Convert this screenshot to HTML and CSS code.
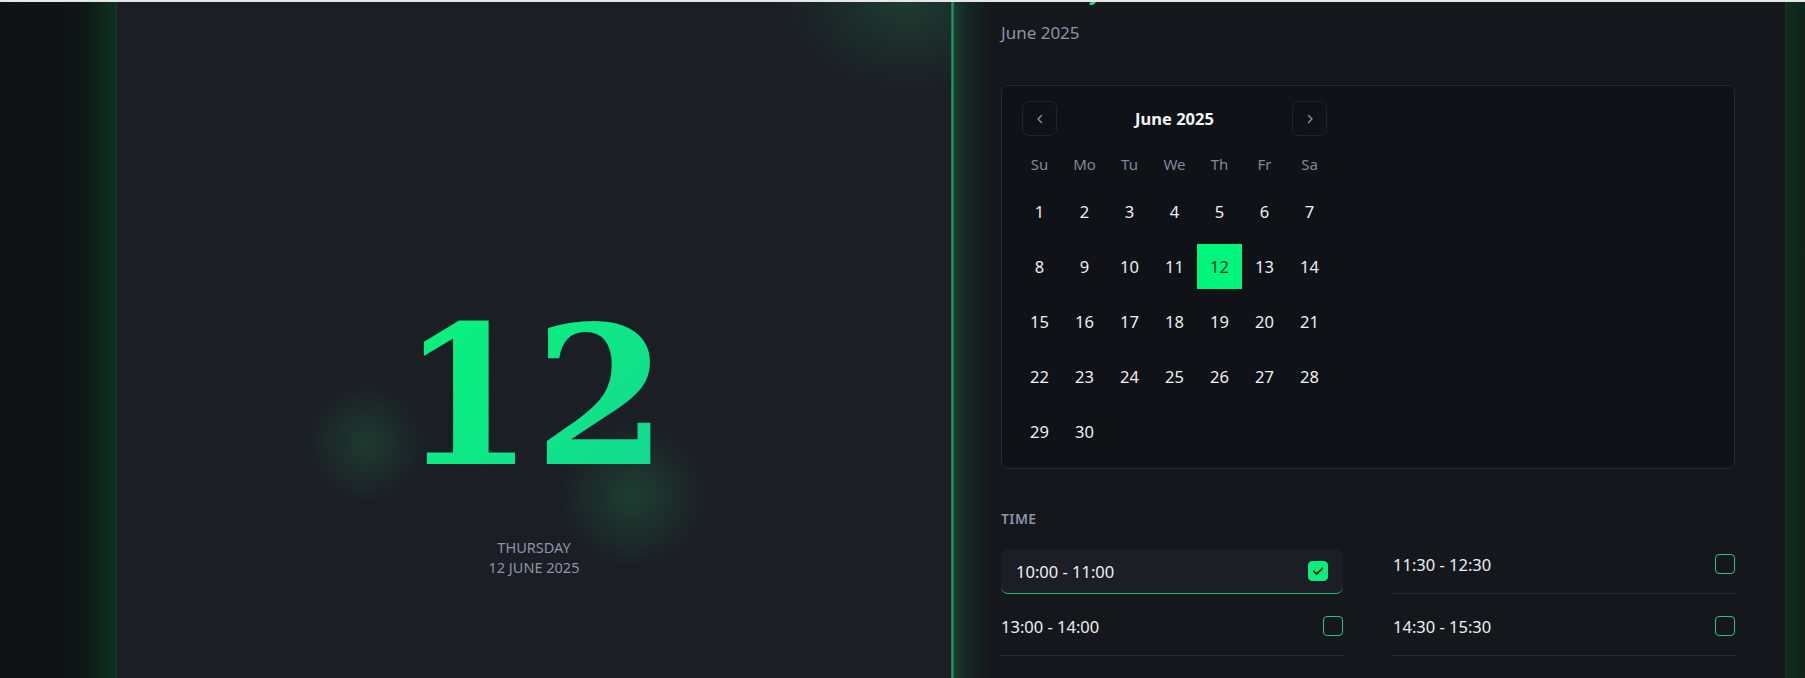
FILE: index.html
```html
<!DOCTYPE html>
<html lang="en">
<head>
<meta charset="utf-8">
<title>Booking</title>
<link rel="stylesheet" href="styles.css">
</head>
<body>
<div class="topbar"></div>
<div class="page">
  <div class="gutter gutter-left"></div>
  <main class="card">
    <section class="hero">
      <div class="day-number">12</div>
      <div class="day-meta">
        <span>Thursday</span>
        <span>12 June 2025</span>
      </div>
    </section>
    <div class="divider"></div>
    <section class="booking">
      <h2 class="booking-title">Pick a day</h2>
      <p class="booking-sub">June 2025</p>

      <div class="calendar">
        <div class="cal-inner">
          <div class="cal-head">
            <button class="nav-btn" aria-label="Previous month">
              <svg width="12" height="12" viewBox="0 0 12 12"><polyline points="7.5,2.5 4,6 7.5,9.5" fill="none" stroke="#8a93a1" stroke-width="1.4" stroke-linecap="round" stroke-linejoin="round"/></svg>
            </button>
            <div class="cal-title">June 2025</div>
            <button class="nav-btn" aria-label="Next month">
              <svg width="12" height="12" viewBox="0 0 12 12"><polyline points="4.5,2.5 8,6 4.5,9.5" fill="none" stroke="#8a93a1" stroke-width="1.4" stroke-linecap="round" stroke-linejoin="round"/></svg>
            </button>
          </div>
          <div class="weekdays">
            <span>Su</span><span>Mo</span><span>Tu</span><span>We</span><span>Th</span><span>Fr</span><span>Sa</span>
          </div>
          <div class="days">
            <span class="day">1</span><span class="day">2</span><span class="day">3</span><span class="day">4</span><span class="day">5</span><span class="day">6</span><span class="day">7</span>
            <span class="day">8</span><span class="day">9</span><span class="day">10</span><span class="day">11</span><span class="day day-selected">12</span><span class="day">13</span><span class="day">14</span>
            <span class="day">15</span><span class="day">16</span><span class="day">17</span><span class="day">18</span><span class="day">19</span><span class="day">20</span><span class="day">21</span>
            <span class="day">22</span><span class="day">23</span><span class="day">24</span><span class="day">25</span><span class="day">26</span><span class="day">27</span><span class="day">28</span>
            <span class="day">29</span><span class="day">30</span>
          </div>
        </div>
      </div>

      <h3 class="time-label">Time</h3>
      <div class="slots">
        <div class="slot slot-selected">
          <span>10:00 - 11:00</span>
          <span class="check check-on">
            <svg width="20" height="20" viewBox="0 0 20 20"><polyline points="5.2,10.2 8.5,13.4 14.8,7" fill="none" stroke="#0c1a12" stroke-width="2" stroke-linecap="round" stroke-linejoin="round"/></svg>
          </span>
        </div>
        <div class="slot">
          <span>11:30 - 12:30</span>
          <span class="check"></span>
        </div>
        <div class="slot">
          <span>13:00 - 14:00</span>
          <span class="check"></span>
        </div>
        <div class="slot">
          <span>14:30 - 15:30</span>
          <span class="check"></span>
        </div>
      </div>
    </section>
  </main>
  <div class="gutter gutter-right"></div>
</div>
</body>
</html>
```

FILE: styles.css
```css
* { box-sizing: border-box; }

html, body {
  margin: 0;
  padding: 0;
  height: 100%;
  overflow: hidden;
}

body {
  background: #0f1115;
  font-family: "Noto Sans", "Open Sans", "Liberation Sans", sans-serif;
  color: #eef0f3;
}

.topbar {
  height: 2px;
  background: #e7e7ea;
}

.page {
  display: flex;
  height: 676px;
  overflow: hidden;
}

.gutter-left {
  width: 116px;
  flex: none;
  background: linear-gradient(90deg, #0f1115 0, #101215 62px, #0f1a17 88px, #0f2a1e 108px, #10301f 116px);
}

.gutter-right {
  flex: 1;
  background: linear-gradient(90deg, #0f2d1e 0, #0e281b 10px, #0f2219 19px);
}

.card {
  display: flex;
  width: 1670px;
  flex: none;
  border-left: 1px solid #2b3037;
  border-right: 1px solid #262b31;
}

/* ---------- hero ---------- */
.hero {
  width: 834px;
  flex: none;
  display: flex;
  flex-direction: column;
  align-items: center;
  padding-top: 299px;
  background:
    radial-gradient(circle at 249px 441px, rgba(34, 110, 66, 0.36) 0, rgba(34, 110, 66, 0.14) 36px, rgba(27, 30, 37, 0) 62px),
    radial-gradient(circle at 516px 493px, rgba(34, 115, 68, 0.38) 0, rgba(34, 115, 68, 0.15) 44px, rgba(27, 30, 37, 0) 76px),
    radial-gradient(ellipse 130px 95px at 790px 0px, rgba(32, 100, 62, 0.42) 0, rgba(32, 100, 62, 0.14) 60%, rgba(27, 30, 37, 0) 100%),
    #1b1e25;
}

.day-number {
  font-family: "DejaVu Serif", "Liberation Serif", serif;
  font-size: 192px;
  line-height: 192px;
  font-weight: 700;
  letter-spacing: 0;
  background: linear-gradient(135deg, #07f47a 0%, #0ee886 50%, #14d592 100%);
  -webkit-background-clip: text;
  background-clip: text;
  color: transparent;
}

.day-meta {
  margin-top: 44px;
  display: flex;
  flex-direction: column;
  align-items: center;
  font-size: 14.5px;
  line-height: 20px;
  color: #8b95a5;
  text-transform: uppercase;
}

/* ---------- divider ---------- */
.divider {
  width: 3px;
  flex: none;
  background: linear-gradient(90deg, #1b6f4a, #21915f, #1b6f4a);
}

/* ---------- booking ---------- */
.booking {
  width: 831px;
  flex: none;
  padding: 0 50px 0 47px;
  background:
    linear-gradient(90deg, rgba(30, 110, 70, 0.45) 0, rgba(30, 90, 60, 0.2) 14px, rgba(20, 23, 28, 0) 40px),
    #14171c;
}

.booking-title {
  margin: -22px 0 0;
  font-size: 20px;
  line-height: 26px;
  font-weight: 700;
  color: #10e884;
}

.booking-sub {
  margin: 15px 0 0;
  font-size: 17px;
  line-height: 24px;
  color: #8b95a5;
}

.calendar {
  margin-top: 40px;
  height: 384px;
  border: 1px solid #262a31;
  border-radius: 7px;
  background: #0f1216;
  padding: 15px 15px 0;
}

.cal-inner {
  width: 315px;
}

.cal-head {
  display: flex;
  align-items: center;
  justify-content: space-between;
  padding: 0 5px;
  height: 35px;
}

.nav-btn {
  width: 35px;
  height: 35px;
  border: 1px solid #20242b;
  border-radius: 7px;
  background: transparent;
  display: flex;
  align-items: center;
  justify-content: center;
  padding: 0;
}

.cal-title {
  font-size: 16.5px;
  font-weight: 700;
  color: #f4f5f7;
}

.weekdays {
  margin-top: 17px;
  display: grid;
  grid-template-columns: repeat(7, 45px);
  height: 22px;
  align-items: center;
  font-size: 15px;
  color: #7f8997;
  text-align: center;
}

.days {
  margin-top: 14px;
  display: grid;
  grid-template-columns: repeat(7, 45px);
  grid-auto-rows: 45px;
  row-gap: 10px;
}

.day {
  display: flex;
  align-items: center;
  justify-content: center;
  font-size: 16.5px;
  color: #eef0f3;
}

.day-selected {
  background: #00f67b;
  color: #123322;
}

/* ---------- time ---------- */
.time-label {
  margin: 40px 0 0;
  font-size: 14px;
  line-height: 20px;
  font-weight: 600;
  letter-spacing: 0.4px;
  color: #8b95a5;
  text-transform: uppercase;
}

.slots {
  margin-top: 20px;
  display: grid;
  grid-template-columns: 342px 342px;
  column-gap: 50px;
  row-gap: 17px;
}

.slot {
  height: 45px;
  display: flex;
  align-items: center;
  justify-content: space-between;
  padding: 2px 0 16px;
  border-bottom: 1px solid #272b32;
  font-size: 16.5px;
  color: #eef0f3;
}

.slot-selected {
  padding: 0 15px;
  background: #1b1e25;
  border-radius: 7px;
  border-bottom: 1px solid #22b36d;
}

.check {
  width: 20px;
  height: 20px;
  border: 1.5px solid #2bc27a;
  border-radius: 4px;
  display: flex;
  align-items: center;
  justify-content: center;
}

.check-on {
  background: #07f07c;
  border-color: #07f07c;
}
```
